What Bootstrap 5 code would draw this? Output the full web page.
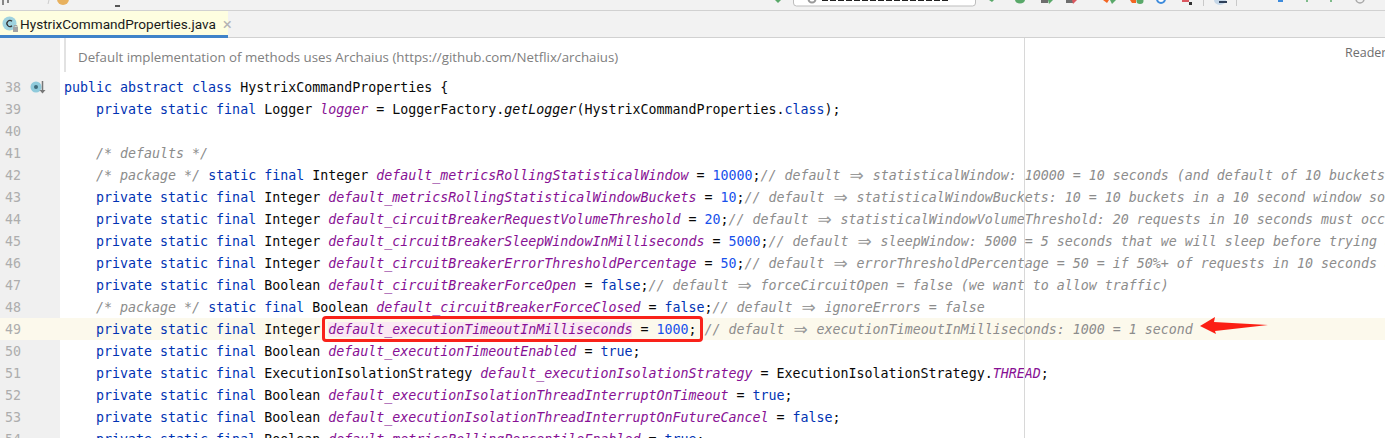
<!doctype html>
<html lang="en">
<head>
<meta charset="utf-8">
<title>HystrixCommandProperties.java</title>
<link href="https://cdn.jsdelivr.net/npm/bootstrap@5.3.0/dist/css/bootstrap.min.css" rel="stylesheet">
<style>
html,body{margin:0;height:438px;overflow:hidden;background:#fff}
.ide{position:relative;width:1385px;height:438px;overflow:hidden}
.toolstrip{height:11px;background:#f2f2f2;border-bottom:1px solid #d1d1d1;overflow:hidden}
.toolstrip svg{display:block}
.tabstrip{height:27px;background:#f2f2f2;border-bottom:1px solid #d1d1d1}
.filetab{width:228px;height:27px;background:#fefee0;border-bottom:3px solid #4083c9;padding-left:2px;padding-top:2px;font:13.6px "Roboto",sans-serif;color:#1a1a1a}
.filetab svg{flex:none;margin-right:1px}
.filetab .closer{margin-left:7px;color:#b4b4b4;font-size:17px;line-height:1}
.docwrap{height:38px}
.gutter{width:60px;flex:none;background:#f0f0f0}
.docblock{margin-left:4px;height:34px;border-left:2px solid #e2e2e2;padding-left:12px;font:13.3px/38px "Open Sans",sans-serif;color:#808080;white-space:pre;flex:1;overflow:hidden}
.coderow{height:22px}
.lineno{width:60px;flex:none;background:#f0f0f0;padding-left:5px;padding-top:1px;color:#adadad;font:13.3px/21px "DejaVu Sans Mono",monospace;position:relative}
.coderow.hot .lineno{background:#fcf9ec}
.coderow.hot{background:#fcf9ec}
.src{padding-left:4px;padding-top:1px;font:13.3px/21px "DejaVu Sans Mono",monospace;white-space:pre;color:#080808;overflow:hidden;flex:1}
.kw{color:#0033b3}
.fld{color:#871094;font-style:italic}
.num{color:#1750eb}
.cmt{color:#8c8c8c;font-style:italic}
.mth{font-style:italic}
.lig{display:inline-block;width:16px;height:16px;text-align:center;font:normal 17px/16px "DejaVu Sans",sans-serif;vertical-align:-1px;overflow:visible;color:#9a9a9a}
.pinked{background:#fbe8f4}
.overlay{position:absolute}
.marginline{left:1024px;top:38px;width:1px;height:400px;background:#d8d8d8}
.readerlabel{left:1345px;top:44px;font:12.5px "Open Sans",sans-serif;color:#6e6e6e}
.redbox{left:322px;top:316px;width:381px;height:26px;border:3px solid #f9221a;border-radius:4px}
.gutmark{position:absolute;left:26px;top:3px}
.arrowmark{left:1195px;top:312px}
</style>
</head>
<body>
<div class="ide">
  <div class="toolstrip">
    <svg width="1385" height="10" viewBox="0 0 1385 10" aria-hidden="true">
      <path d="M3 0v5M8 0v3" stroke="#666" stroke-width="1.500"/>
      <path d="M49 0l-1 4" stroke="#ccc"/>
      <circle cx="63" cy="-1" r="6" fill="#e8b15e"/>
      <path d="M115 6h5" stroke="#222" stroke-width="1.500"/>
      <path d="M775 0h6l-3 3z" fill="#59a869"/>
      <rect x="793.500" y="-8" width="182" height="14" rx="3" fill="#fff" stroke="#bdbdbd"/>
      <circle cx="812" cy="-1" r="3.500" fill="none" stroke="#999" stroke-width="2"/>
      <path d="M822 0h126" stroke="#222" stroke-width="2" stroke-dasharray="6 2"/>
      <path d="M989 0l3 2 2-2z" fill="#59a869"/>
      <ellipse cx="1020" cy="0" rx="5" ry="3.500" fill="#59a869"/>
      <path d="M1041 0h7v3h-7z" fill="#6e6e6e"/><path d="M1048 0h5l-4 4z" fill="#59a869"/>
      <path d="M1066 0h7v3h-7z" fill="#6e6e6e"/><path d="M1072 0h5l-4 4z" fill="#db5860"/>
      <path d="M1103 0h6l-2 3z" fill="#f26522"/><path d="M1110 0h6l-4 4z" fill="#59a869"/>
      <path d="M1130 0h6v3h-4z" fill="#f26522"/><ellipse cx="1140" cy="1" rx="3.500" ry="3" fill="#59a869"/>
      <circle cx="1161" cy="-1" r="4" fill="#fff" stroke="#3d8bdc" stroke-width="2"/>
      <path d="M1182 0h7v2h-7z" fill="#db5860"/><path d="M1189 2h3v3h-3z" fill="#333"/>
      <path d="M1203.500 0v6M1236.500 0v6" stroke="#c9c9c9"/>
      <ellipse cx="1220" cy="0" rx="6" ry="5" fill="#c5d7e8"/><path d="M1219 1h8v2h-8z" fill="#2f4059"/>
      <path d="M1278 0h5v2h-5z" fill="#3d8bdc"/>
      <path d="M1307 0v2" stroke="#59a869" stroke-width="1.500"/>
      <path d="M1331 0v2" stroke="#59a869" stroke-width="1.500"/>
      <circle cx="1360" cy="-1" r="4" fill="none" stroke="#aaa" stroke-width="1.500"/>
    </svg>
  </div>
  <div class="tabstrip">
    <div class="filetab d-flex align-items-center">
      <svg width="17" height="18" viewBox="0 0 17 18" aria-hidden="true">
        <circle cx="7.500" cy="8.500" r="7" fill="#9fd3df"/>
        <path d="M10 6.300a3 3 0 1 0 0 4.400" fill="none" stroke="#333" stroke-width="1.300"/>
        <rect x="11" y="12" width="5" height="5" fill="#a4a4a4"/>
        <path d="M12 12v-1.500h3V12" fill="none" stroke="#a4a4a4"/>
      </svg>
      <span>HystrixCommandProperties.java</span>
      <span class="closer">×</span>
    </div>
  </div>
  <div class="docwrap d-flex">
    <div class="gutter"></div>
    <div class="docblock">Default implementation of methods uses Archaius (https://github.com/Netflix/archaius)</div>
  </div>
  <div class="coderow d-flex"><div class="lineno">38<svg class="gutmark" width="20" height="16" viewBox="0 0 20 16" aria-hidden="true"><circle cx="10" cy="8" r="5.500" fill="#8fcadb"/><circle cx="10" cy="8" r="2" fill="#3f6b7a"/><path d="M16.500 2v10" stroke="#777" stroke-width="1.500"/><path d="M13.500 11h6l-3 3.500z" fill="#777"/></svg></div><div class="src"><span class="kw">public abstract class</span> HystrixCommandProperties {</div></div>
  <div class="coderow d-flex"><div class="lineno">39</div><div class="src">    <span class="kw">private static final</span> Logger <span class="fld">logger</span> = LoggerFactory.<span class="mth">getLogger</span>(HystrixCommandProperties.<span class="kw">class</span>);</div></div>
  <div class="coderow d-flex"><div class="lineno">40</div><div class="src"></div></div>
  <div class="coderow d-flex"><div class="lineno">41</div><div class="src">    <span class="cmt">/* defaults */</span></div></div>
  <div class="coderow d-flex"><div class="lineno">42</div><div class="src">    <span class="cmt">/* package */</span> <span class="kw">static final</span> Integer <span class="fld">default_metricsRollingStatisticalWindow</span> = <span class="num">10000</span>;<span class="cmt">// default <span class="lig">⇒</span> statisticalWindow: 10000 = 10 seconds (and default of 10 buckets so each bucket is 1 second)</span></div></div>
  <div class="coderow d-flex"><div class="lineno">43</div><div class="src">    <span class="kw">private static final</span> Integer <span class="fld">default_metricsRollingStatisticalWindowBuckets</span> = <span class="num">10</span>;<span class="cmt">// default <span class="lig">⇒</span> statisticalWindowBuckets: 10 = 10 buckets in a 10 second window so each bucket is 1 second</span></div></div>
  <div class="coderow d-flex"><div class="lineno">44</div><div class="src">    <span class="kw">private static final</span> Integer <span class="fld">default_circuitBreakerRequestVolumeThreshold</span> = <span class="num">20</span>;<span class="cmt">// default <span class="lig">⇒</span> statisticalWindowVolumeThreshold: 20 requests in 10 seconds must occur before statistics matter</span></div></div>
  <div class="coderow d-flex"><div class="lineno">45</div><div class="src">    <span class="kw">private static final</span> Integer <span class="fld">default_circuitBreakerSleepWindowInMilliseconds</span> = <span class="num">5000</span>;<span class="cmt">// default <span class="lig">⇒</span> sleepWindow: 5000 = 5 seconds that we will sleep before trying again after tripping the circuit</span></div></div>
  <div class="coderow d-flex"><div class="lineno">46</div><div class="src">    <span class="kw">private static final</span> Integer <span class="fld">default_circuitBreakerErrorThresholdPercentage</span> = <span class="num">50</span>;<span class="cmt">// default <span class="lig">⇒</span> errorThresholdPercentage = 50 = if 50%+ of requests in 10 seconds are failures or latent</span></div></div>
  <div class="coderow d-flex"><div class="lineno">47</div><div class="src">    <span class="kw">private static final</span> Boolean <span class="fld">default_circuitBreakerForceOpen</span> = <span class="kw">false</span>;<span class="cmt">// default <span class="lig">⇒</span> forceCircuitOpen = false (we want to allow traffic)</span></div></div>
  <div class="coderow d-flex"><div class="lineno">48</div><div class="src">    <span class="cmt">/* package */</span> <span class="kw">static final</span> Boolean <span class="fld">default_circuitBreakerForceClosed</span> = <span class="kw">false</span>;<span class="cmt">// default <span class="lig">⇒</span> ignoreErrors = false</span></div></div>
  <div class="coderow hot d-flex"><div class="lineno">49</div><div class="src">    <span class="kw">private static final</span> Integer <span class="fld pinked">default_executionTimeoutInMilliseconds</span> = <span class="num">1000</span>; <span class="cmt">// default <span class="lig">⇒</span> executionTimeoutInMilliseconds: 1000 = 1 second</span></div></div>
  <div class="coderow d-flex"><div class="lineno">50</div><div class="src">    <span class="kw">private static final</span> Boolean <span class="fld">default_executionTimeoutEnabled</span> = <span class="kw">true</span>;</div></div>
  <div class="coderow d-flex"><div class="lineno">51</div><div class="src">    <span class="kw">private static final</span> ExecutionIsolationStrategy <span class="fld">default_executionIsolationStrategy</span> = ExecutionIsolationStrategy.<span class="fld">THREAD</span>;</div></div>
  <div class="coderow d-flex"><div class="lineno">52</div><div class="src">    <span class="kw">private static final</span> Boolean <span class="fld">default_executionIsolationThreadInterruptOnTimeout</span> = <span class="kw">true</span>;</div></div>
  <div class="coderow d-flex"><div class="lineno">53</div><div class="src">    <span class="kw">private static final</span> Boolean <span class="fld">default_executionIsolationThreadInterruptOnFutureCancel</span> = <span class="kw">false</span>;</div></div>
  <div class="coderow d-flex"><div class="lineno">54</div><div class="src">    <span class="kw">private static final</span> Boolean <span class="fld">default_metricsRollingPercentileEnabled</span> = <span class="kw">true</span>;</div></div>

  <div class="overlay marginline"></div>
  <div class="overlay readerlabel">Reader</div>
  <div class="overlay redbox"></div>
  <svg class="overlay arrowmark" width="80" height="28" viewBox="1195 312 80 28" aria-hidden="true"><path d="M1200 326l15-9-1 5 54 3-53 6 1 3z" fill="#fb1f14"/></svg>
</div>
<script src="https://cdn.jsdelivr.net/npm/bootstrap@5.3.0/dist/js/bootstrap.bundle.min.js"></script>
</body>
</html>
